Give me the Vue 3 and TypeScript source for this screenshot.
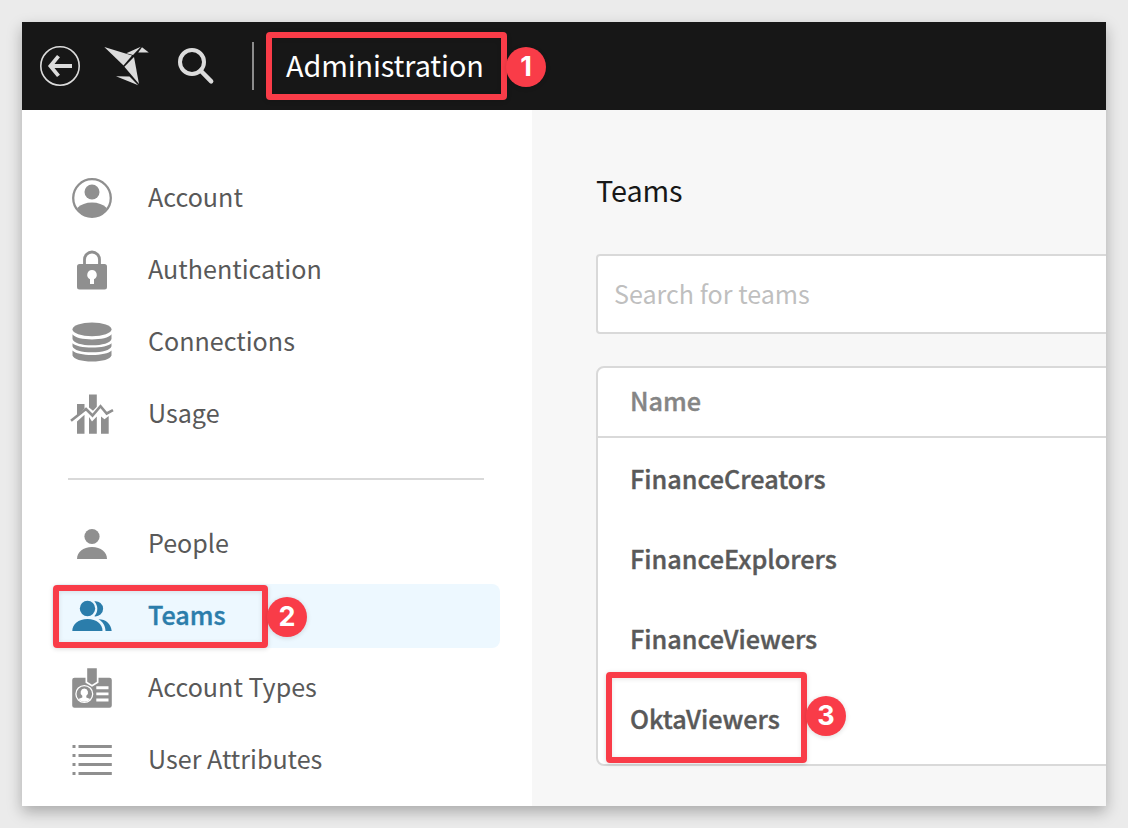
<script setup lang="ts">
import { computed, ref } from 'vue'

type IconName = 'account' | 'lock' | 'database' | 'usage' | 'person' | 'people' | 'badge' | 'list'

interface MenuItem {
  label: string
  icon: IconName
  step?: number
}

const menuGroups: MenuItem[][] = [
  [
    { label: 'Account', icon: 'account' },
    { label: 'Authentication', icon: 'lock' },
    { label: 'Connections', icon: 'database' },
    { label: 'Usage', icon: 'usage' },
  ],
  [
    { label: 'People', icon: 'person' },
    { label: 'Teams', icon: 'people', step: 2 },
    { label: 'Account Types', icon: 'badge' },
    { label: 'User Attributes', icon: 'list' },
  ],
]

const teams: { name: string; step?: number }[] = [
  { name: 'FinanceCreators' },
  { name: 'FinanceExplorers' },
  { name: 'FinanceViewers' },
  { name: 'OktaViewers', step: 3 },
]

const active = ref('Teams')
const query = ref('')
const visibleTeams = computed(() =>
  teams.filter((t) => t.name.toLowerCase().includes(query.value.toLowerCase())),
)
</script>

<template>
  <div class="desktop">
    <div class="window">
      <header class="topbar">
        <svg class="back" viewBox="0 0 40 40" fill="none" stroke="#dcdcdc">
          <circle cx="20" cy="20" r="19.2" stroke-width="1.6" />
          <path d="M32 20H11M18.5 10.1L10.4 20l8.1 9.9" stroke-width="3.8" />
        </svg>
        <svg class="logo" viewBox="0 0 52 48" fill="#dcdcdc">
          <path d="M4.3 5L32 13.6 23.5 23.4z" />
          <path d="M26.3 11.3L40.8 4.8 33 13z" />
          <path d="M42 5.2L48.8 10.6H38.2z" />
          <path d="M24.4 24.7L34 15 39 42z" />
          <path d="M16 34.2L29.5 34.4 38.2 43.3z" />
        </svg>
        <svg class="search" viewBox="0 0 38 38" fill="none" stroke="#dcdcdc">
          <circle cx="15" cy="15" r="12" stroke-width="4" />
          <path d="M23.5 23.5L34.2 34.4" stroke-width="4.4" stroke-linecap="round" />
        </svg>
        <span class="rule"></span>
        <div class="title">
          <span class="title-text">Administration</span>
          <span class="mark mark-1"></span>
          <b class="step step-1">1</b>
        </div>
      </header>

      <div class="body">
        <nav class="sidebar">
          <ul v-for="(group, g) in menuGroups" :key="g" class="group">
            <li
              v-for="item in group"
              :key="item.label"
              class="item"
              :class="{ active: item.label === active }"
              @click="active = item.label"
            >
              <svg class="icon" viewBox="0 0 40 40" fill="currentColor">
                <template v-if="item.icon === 'account'">
                  <circle cx="20" cy="20" r="18.8" fill="none" stroke="currentColor" stroke-width="2.3" />
                  <circle cx="20" cy="14" r="7.5" />
                  <path d="M5.2 30C9 26.5 14 24.6 20 24.6S31 26.5 34.8 30C31.5 35.6 26.5 38.8 20 38.8S8.5 35.6 5.2 30z" />
                </template>
                <template v-else-if="item.icon === 'lock'">
                  <path d="M12.5 17V9.5a7.5 7.5 0 0 1 15 0V17" fill="none" stroke="currentColor" stroke-width="2.8" />
                  <path fill-rule="evenodd" d="M7.5 14h25a2.5 2.5 0 0 1 2.5 2.5v20.5a2.5 2.5 0 0 1-2.5 2.5h-25A2.5 2.5 0 0 1 5 37V16.5A2.5 2.5 0 0 1 7.5 14zM20 20a4.9 4.9 0 0 0-2 9.3V34h4v-4.7A4.9 4.9 0 0 0 20 20z" />
                </template>
                <template v-else-if="item.icon === 'database'">
                  <ellipse cx="20" cy="7.3" rx="19.5" ry="6.9" />
                  <path d="M.5 12.3c2.5 3.4 10.5 5.2 19.5 5.2s17-1.8 19.5-5.2v4.7c-1.2 4-9 6.3-19.5 6.3S1.7 21 .5 17z" />
                  <path d="M.5 21.2c2.5 2.8 10.5 4.3 19.5 4.3s17-1.5 19.5-4.3v3c-1.2 3.9-9 6.1-19.5 6.1S1.7 28.1.5 24.2z" />
                  <path d="M.5 28.5c2.5 2.8 10.5 4.5 19.5 4.5s17-1.7 19.5-4.5v5c-1.2 3.8-9 6-19.5 6S1.7 37.3.5 33.5z" />
                </template>
                <template v-else-if="item.icon === 'usage'">
                  <path d="M5 10h7.5v4.5L5 21.5zM17 .5h7.8v12.3l-3.8 4-4-3.3z" />
                  <path d="M5 27.5l7.5-6.8v19H5zM17 23l3 4.5 4.8-5v17.2H17zM29 22.5l3.5 2.7 4.2-3.2v17.7H29z" />
                  <path d="M-1 26.8L14 15l6.5 6.5L28.5 12.2l6.2 7.3 6.3-3.4" fill="none" stroke="currentColor" stroke-width="2.6" />
                </template>
                <template v-else-if="item.icon === 'person'">
                  <circle cx="20" cy="12.5" r="7.6" />
                  <path d="M5 35c0-7 6-12 15-12s15 5 15 12z" />
                </template>
                <template v-else-if="item.icon === 'people'">
                  <circle cx="15.5" cy="12.5" r="7.7" />
                  <path d="M.3 35c0-7 6-12 15.2-12s15 5 15 12z" />
                  <path d="M22.3 5.3a7.6 7.6 0 1 1 0 15c4-4.3 4-10.5 0-15z" />
                  <path d="M26.5 23.3C34 23.3 39 28 39.7 35h-6.2c0-5-2.5-9-7-11.7z" />
                </template>
                <template v-else-if="item.icon === 'badge'">
                  <path d="M15.2.2h9.6v13.5L20 16.8l-4.8-3.1z" />
                  <path fill-rule="evenodd" d="M2.5 9.7h11v5L20 18.8l6.5-4.1v-5h11a2.3 2.3 0 0 1 2.3 2.3v25.5a2.3 2.3 0 0 1-2.3 2.3h-35A2.3 2.3 0 0 1 .2 37.5V12a2.3 2.3 0 0 1 2.3-2.3z" />
                  <circle cx="12.3" cy="26" r="8.4" fill="none" stroke="#fff" stroke-width="1.3" />
                  <path d="M12.3 20.5a4 4 0 0 1 2 7.3v1.7l4 1.5a7.7 7.7 0 0 1-12 0l4-1.5v-1.7a4 4 0 0 1 2-7.3z" fill="#fff" />
                  <path d="M24.3 19.8H36.5M24.3 25.9H36.5M24.3 32H36.5" stroke="#fff" stroke-width="2.9" />
                </template>
                <template v-else>
                  <path d="M.5 6.5h3M6.5 6.5h33.3M.5 15.5h3M6.5 15.5h33.3M.5 24.5h3M6.5 24.5h33.3M.5 33.5h3M6.5 33.5h33.3" stroke="currentColor" stroke-width="2.8" />
                </template>
              </svg>
              <span class="label">{{ item.label }}</span>
              <template v-if="item.step">
                <span class="mark mark-2"></span>
                <b class="step step-2">{{ item.step }}</b>
              </template>
            </li>
          </ul>
        </nav>

        <main class="content">
          <h1>Teams</h1>
          <input v-model="query" class="field" type="text" placeholder="Search for teams" />
          <section class="table">
            <div class="head">Name</div>
            <div v-for="team in visibleTeams" :key="team.name" class="row">
              {{ team.name }}
              <template v-if="team.step">
                <span class="mark mark-3"></span>
                <b class="step step-3">{{ team.step }}</b>
              </template>
            </div>
          </section>
        </main>
      </div>
    </div>
  </div>
</template>

<style>
body {
  margin: 0;
  overflow: hidden;
}
</style>

<style scoped>
* {
  box-sizing: border-box;
}
.desktop {
  width: 1128px;
  height: 828px;
  padding: 22px;
  background: #ebebeb;
  overflow: hidden;
  font-family: 'Noto Sans CJK SC', sans-serif;
  font-size: 25.1px;
  color: #595959;
}
.window {
  width: 1084px;
  height: 784px;
  background: #fff;
  box-shadow: 0 6px 14px rgba(0, 0, 0, 0.28);
}
.topbar {
  display: flex;
  align-items: center;
  height: 88px;
  padding-left: 18px;
  background: #171717;
}
.back {
  width: 40px;
  height: 40px;
}
.logo {
  width: 52px;
  height: 48px;
  margin-left: 20px;
}
.search {
  width: 38px;
  height: 38px;
  margin-left: 25px;
}
.rule {
  width: 2px;
  height: 48px;
  margin-left: 37px;
  background: #8c8c8c;
}
.title {
  position: relative;
  height: 48px;
  margin-left: 32px;
  color: #fff;
  font-size: 28.8px;
  line-height: 46px;
  letter-spacing: -0.1px;
}
.body {
  display: flex;
  height: 696px;
}
.sidebar {
  flex: none;
  width: 510px;
  padding: 56px 32px 0 30px;
}
.group {
  margin: 0;
  padding: 0;
  list-style: none;
  display: flex;
  flex-direction: column;
  gap: 8px;
}
.group + .group::before {
  content: '';
  height: 2px;
  margin: 32px 16px 24px;
  background: #d9d9d9;
}
.item {
  position: relative;
  display: flex;
  align-items: center;
  gap: 36px;
  height: 64px;
  padding-left: 20px;
  border-radius: 8px;
  line-height: 40px;
}
.label {
  padding-bottom: 4px;
}
.item.active {
  background: #edf8ff;
  color: #2b7dab;
}
.active .label,
.table {
  font-size: 25.2px;
  font-weight: 500;
  -webkit-text-stroke: 0.4px currentColor;
}
.icon {
  flex: none;
  width: 40px;
  height: 40px;
  color: #8f8f8f;
  overflow: visible;
}
.active .icon {
  color: #2b7dab;
}
.content {
  flex: 1;
  min-width: 0;
  padding: 56px 0 0 64px;
  background: #f7f7f7;
  overflow: hidden;
}
h1 {
  margin: 0 0 40px;
  color: #171717;
  font-size: 28.8px;
  font-weight: 400;
  line-height: 48px;
  letter-spacing: -0.1px;
}
.field {
  display: block;
  width: 560px;
  height: 80px;
  margin: 0 0 32px;
  padding: 0 16px 2px;
  border: 2px solid #d9d9d9;
  border-radius: 4px;
  background: #fff;
  font: inherit;
  outline: none;
}
.field::placeholder {
  color: #bfbfbf;
  opacity: 1;
}
.table {
  width: 560px;
  height: 400px;
  border: 2px solid #d9d9d9;
  border-radius: 8px;
  background: #fff;
}
.head {
  height: 70px;
  margin-bottom: 2px;
  padding-left: 32px;
  border-bottom: 2px solid #d9d9d9;
  color: #858585;
  line-height: 64px;
}
.row {
  position: relative;
  height: 80px;
  padding-left: 32px;
  line-height: 76px;
}

/* Numbered call-outs laid over the screen */
.mark {
  position: absolute;
  border: 6px solid #f93c48;
  border-radius: 4px;
  box-shadow: 0 1px 5px rgba(0, 0, 0, 0.14), inset 0 1px 5px rgba(0, 0, 0, 0.1);
}
.mark-1 {
  left: -20px;
  top: -10px;
  width: 241px;
  height: 68px;
}
.mark-2 {
  left: 1px;
  top: 1px;
  width: 215px;
  height: 63px;
}
.mark-3 {
  left: 8px;
  top: -8px;
  width: 201px;
  height: 91px;
}
.step {
  position: absolute;
  width: 40px;
  height: 40px;
  border-radius: 50%;
  background: #f93c48;
  box-shadow: 0 1px 5px rgba(0, 0, 0, 0.14);
  color: #fff;
  font: 700 27px/40px Inter, sans-serif;
  letter-spacing: 0;
  text-align: center;
  -webkit-text-stroke: 0;
}
.step-1 {
  left: 220px;
  top: 5px;
}
.step-2 {
  left: 215px;
  top: 13px;
}
.step-3 {
  left: 208px;
  top: 16px;
}
</style>
